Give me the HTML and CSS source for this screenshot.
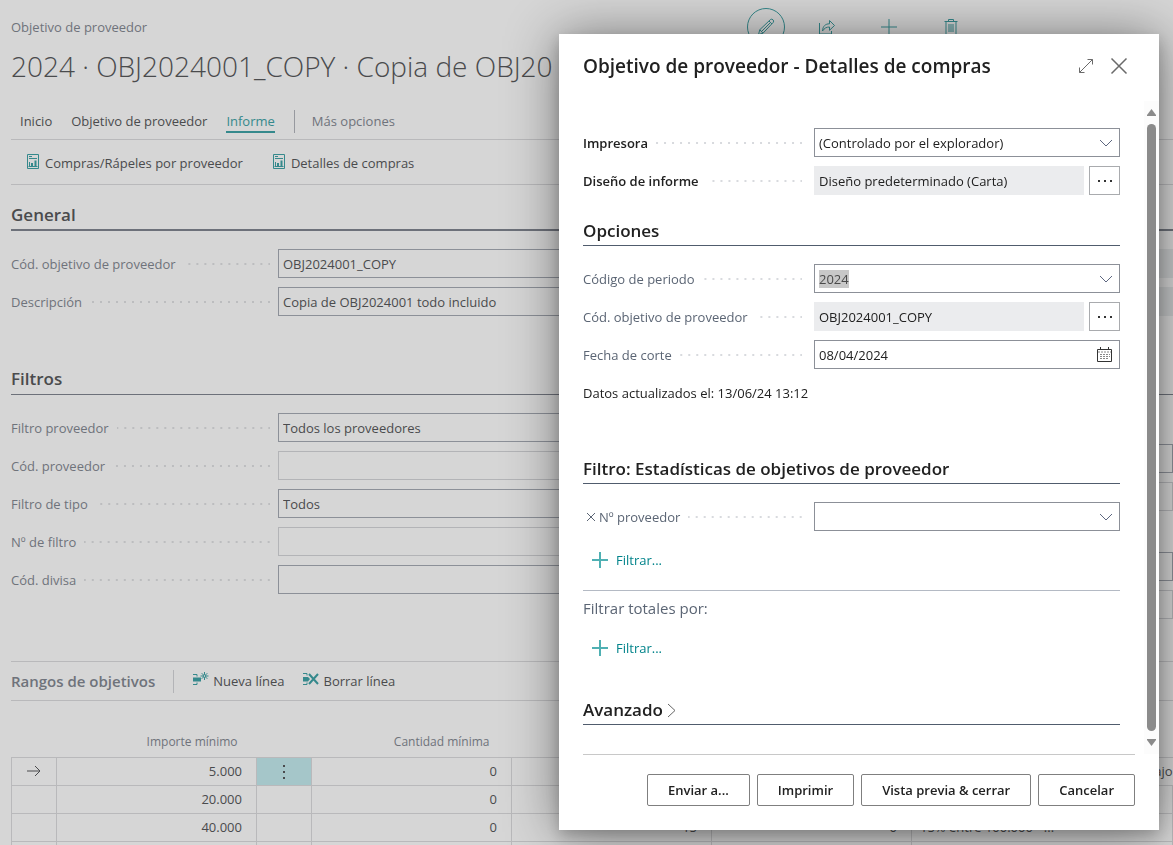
FILE: index.html
```html
<!DOCTYPE html>
<html lang="es">
<head>
<meta charset="utf-8">
<title>Objetivo de proveedor</title>
<link rel="stylesheet" href="styles.css">
</head>
<body>
<main class="page">
  <div class="topbar">
    <span class="caption">Objetivo de proveedor</span>
    <div class="tools">
      <button class="tool tool-round" aria-label="Editar"><svg width="20" height="20" viewBox="0 0 20 20"><path d="M2.500 17.500l1.300-4.800L14.500 2.500q1.300-.9 2.500.3t.3 2.500L7 16.200zM3.800 12.700L7 16.200M13 4l3 3M5.500 14.500L15 5"/></svg></button>
      <button class="tool" aria-label="Compartir"><svg width="18" height="18" viewBox="0 0 18 18"><path d="M1.500 5v11h12v-3M4.500 13c.3-5 3-7.200 7-7.200V2.500L16.500 7.500l-5 4.800V9C8.500 9 6.500 10 4.500 13z"/></svg></button>
      <button class="tool" aria-label="Nuevo"><svg width="18" height="18" viewBox="0 0 18 18"><path d="M9 1v16M1 9h16"/></svg></button>
      <button class="tool" aria-label="Eliminar"><svg width="18" height="18" viewBox="0 0 18 18"><path d="M2.500 3.500h13M6.500 3.500v-2h5v2M4 3.500v13h10v-13M7 6v8M9 6v8M11 6v8"/></svg></button>
    </div>
  </div>
  <h1 class="title">2024 · OBJ2024001_COPY · Copia de OBJ20</h1>
  <nav class="tabs">
    <a class="tab" href="#">Inicio</a>
    <a class="tab" href="#">Objetivo de proveedor</a>
    <a class="tab tab-active" href="#">Informe</a>
    <a class="tab tab-more" href="#">Más opciones</a>
  </nav>
  <div class="actions">
    <button class="action"><svg width="12" height="15" viewBox="0 0 12 15"><path d="M.5.5h11v14H.5zM2 2.500h3M2 4.500h8M2.500 8v4.500M1.500 12.500h9"/><path d="M4 9h2v3H4zM7.500 6.500h2V12h-2z" class="solid"/></svg>Compras/Rápeles por proveedor</button>
    <button class="action"><svg width="12" height="15" viewBox="0 0 12 15"><path d="M.5.5h11v14H.5zM2 2.500h3M2 4.500h8M2.500 8v4.500M1.500 12.500h9"/><path d="M4 9h2v3H4zM7.500 6.500h2V12h-2z" class="solid"/></svg>Detalles de compras</button>
  </div>

  <section>
    <h2 class="heading heading-strong">General</h2>
    <div class="columns columns-general">
      <div class="fields">
        <div class="field"><label for="g1">Cód. objetivo de proveedor</label><i class="dots"></i><input class="box" id="g1" value="OBJ2024001_COPY"></div>
        <div class="field"><label for="g2">Descripción</label><i class="dots"></i><input class="box" id="g2" value="Copia de OBJ2024001 todo incluido"></div>
      </div>
      <div class="fields">
        <input class="box box-read" readonly aria-label="Periodo">
        <input class="box box-read" readonly aria-label="Estado">
      </div>
    </div>
  </section>

  <section>
    <h2 class="heading">Filtros</h2>
    <div class="columns columns-filters">
      <div class="fields">
        <div class="field"><label for="f1">Filtro proveedor</label><i class="dots"></i><select class="box" id="f1"><option>Todos los proveedores</option></select></div>
        <div class="field"><label for="f2">Cód. proveedor</label><i class="dots"></i><input class="box box-off" id="f2"></div>
        <div class="field"><label for="f3">Filtro de tipo</label><i class="dots"></i><select class="box" id="f3"><option>Todos</option></select></div>
        <div class="field"><label for="f4">Nº de filtro</label><i class="dots"></i><input class="box box-off" id="f4"></div>
        <div class="field"><label for="f5">Cód. divisa</label><i class="dots"></i><input class="box" id="f5"></div>
      </div>
      <div class="pairs">
        <div class="fields"><input class="box" aria-label="Filtro 1"><input class="box box-off" aria-label="Código 1"></div>
        <div class="fields"><input class="box" aria-label="Filtro 2"><input class="box box-off" aria-label="Código 2"></div>
      </div>
    </div>
  </section>

  <section class="ranges">
    <div class="ranges-bar">
      <h2 class="ranges-title">Rangos de objetivos</h2>
      <button class="action action-line"><svg width="18" height="16" viewBox="0 0 18 16"><path d="M1 3.500h4v2M1 13.500h4v-2"/><path d="M1 6.500h8v4H1z" class="solid"/><path d="M12.500 1v8M8.500 5h8M9.700 2.200l5.600 5.600M15.300 2.200L9.700 7.800"/><circle cx="12.500" cy="5" r="1.300" class="hole"/></svg>Nueva línea</button>
      <button class="action action-line"><svg width="18" height="16" viewBox="0 0 18 16"><path d="M1 2.500h4v2M1 13.500h4v-2"/><path d="M1 6h5l2 2-2 2.500H1z" class="solid"/><path d="M7 3l9 10M16 3L7 13" class="bold"/></svg>Borrar línea</button>
    </div>
    <table class="grid">
      <colgroup><col class="c-mark"><col class="c-num"><col class="c-menu"><col class="c-num"><col class="c-num"><col class="c-num"><col></colgroup>
      <thead><tr><th></th><th>Importe mínimo</th><th></th><th>Cantidad mínima</th><th></th><th></th><th></th></tr></thead>
      <tbody>
        <tr><td class="mark"><svg width="16" height="12" viewBox="0 0 16 12"><path d="M1 6h13M9 1l5 5-5 5"/></svg></td><td>5.000</td><td class="menu"><button class="dots-v" aria-label="Más"><svg width="4" height="16" viewBox="0 0 4 16"><path d="M1 1h2v2H1zM1 7h2v2H1zM1 13h2v2H1z"/></svg></button></td><td>0</td><td></td><td></td><td class="end">Por debajo</td></tr>
        <tr><td></td><td>20.000</td><td></td><td>0</td><td></td><td></td><td></td></tr>
        <tr><td></td><td>40.000</td><td></td><td>0</td><td>15</td><td>0</td><td class="text">15% entre 100.000 - ...</td></tr>
        <tr><td></td><td></td><td></td><td></td><td></td><td></td><td></td></tr>
      </tbody>
    </table>
  </section>
</main>

<div class="overlay">
  <div class="dialog" role="dialog" aria-labelledby="dlg">
    <header class="dialog-head">
      <h2 class="dialog-title" id="dlg">Objetivo de proveedor - Detalles de compras</h2>
      <button class="icon-btn" aria-label="Expandir"><svg width="16" height="16" viewBox="0 0 16 16"><path d="M1.500 14.500l13-13M9.500 1.500h5v5M1.500 9.500v5h5"/></svg></button>
      <button class="icon-btn" aria-label="Cerrar"><svg class="close" width="18" height="18" viewBox="0 0 18 18"><path d="M1.500 1.500l15 15M16.500 1.500l-15 15"/></svg></button>
    </header>
    <div class="dialog-body">
      <div class="content">
        <div class="fields">
          <div class="field strong"><label for="d1">Impresora</label><i class="dots"></i><div class="control"><select class="box" id="d1"><option>(Controlado por el explorador)</option></select><svg class="chev" width="14" height="8" viewBox="0 0 14 8"><path d="M1 1l6 6 6-6"/></svg></div></div>
          <div class="field strong"><label for="d2">Diseño de informe</label><i class="dots"></i><div class="control"><input class="box box-read" id="d2" readonly value="Diseño predeterminado (Carta)"><button class="more" aria-label="Elegir diseño"><svg width="16" height="4" viewBox="0 0 16 4"><path d="M1 1h2v2H1zM7 1h2v2H7zM13 1h2v2h-2z"/></svg></button></div></div>
        </div>
        <h3 class="sub sub-options">Opciones</h3>
        <div class="fields">
          <div class="field"><label for="d3">Código de periodo</label><i class="dots"></i><div class="control"><input class="box" id="d3" value="2024"><svg class="chev" width="14" height="8" viewBox="0 0 14 8"><path d="M1 1l6 6 6-6"/></svg></div></div>
          <div class="field"><label for="d4">Cód. objetivo de proveedor</label><i class="dots"></i><div class="control"><input class="box box-read" id="d4" readonly value="OBJ2024001_COPY"><button class="more" aria-label="Elegir objetivo"><svg width="16" height="4" viewBox="0 0 16 4"><path d="M1 1h2v2H1zM7 1h2v2H7zM13 1h2v2h-2z"/></svg></button></div></div>
          <div class="field"><label for="d5">Fecha de corte</label><i class="dots"></i><div class="control"><input class="box" id="d5" value="08/04/2024"><svg class="cal" width="15" height="15" viewBox="0 0 15 15"><path d="M.5 2.500h14v12H.5zM3.500 0v3M11.500 0v3"/><path class="thin" d="M1 5h13M3 7.500h10M3 9.500h10M3 11.500h8"/></svg></div></div>
          <p class="note">Datos actualizados el: 13/06/24 13:12</p>
        </div>
        <h3 class="sub sub-filter">Filtro: Estadísticas de objetivos de proveedor</h3>
        <div class="field"><button class="remove" aria-label="Quitar filtro"><svg width="8" height="8" viewBox="0 0 8 8"><path d="M0 0l8 8M8 0L0 8"/></svg></button><label for="d6">Nº proveedor</label><i class="dots"></i><div class="control"><input class="box" id="d6"><svg class="chev" width="14" height="8" viewBox="0 0 14 8"><path d="M1 1l6 6 6-6"/></svg></div></div>
        <button class="add"><svg width="16" height="16" viewBox="0 0 16 16"><path d="M8 0v16M0 8h16"/></svg>Filtrar...</button>
        <p class="totals">Filtrar totales por:</p>
        <button class="add"><svg width="16" height="16" viewBox="0 0 16 16"><path d="M8 0v16M0 8h16"/></svg>Filtrar...</button>
        <h3 class="sub sub-advanced">Avanzado<svg width="9" height="15" viewBox="0 0 9 15"><path d="M1 1l7 6.500L1 14"/></svg></h3>
      </div>
      <div class="scroll">
        <svg width="9" height="7" viewBox="0 0 9 7"><path d="M4.500 0L9 6v1H0V6z"/></svg>
        <div class="thumb"></div>
        <svg width="9" height="7" viewBox="0 0 9 7"><path d="M4.500 7L9 1V0H0v1z"/></svg>
      </div>
    </div>
    <footer class="dialog-foot">
      <button class="btn">Enviar a...</button>
      <button class="btn">Imprimir</button>
      <button class="btn">Vista previa &amp; cerrar</button>
      <button class="btn">Cancelar</button>
    </footer>
  </div>
</div>
<script src="script.js"></script>
</body>
</html>
```
FILE: styles.css
```css
* { box-sizing: border-box; }
html, body { height: 100%; margin: 0; overflow: hidden; }
body { background: #d6d6d6; color: #4a4b4d; font: 13px/20px "Segoe UI", "Open Sans", "Noto Sans", sans-serif; }
button, input, select { font: inherit; color: inherit; }
button { background: none; border: 0; padding: 0; }
h1, h2, h3, p { margin: 0; font-weight: 400; }
a { color: inherit; text-decoration: none; }
svg { display: block; flex: none; fill: none; stroke: currentColor; }

.page { padding-left: 11px; }
.topbar { display: flex; align-items: center; justify-content: space-between; padding: 8px 208px 0 0; }
.caption { color: #6f737b; }
.tools { display: flex; align-items: center; gap: 33px; color: #35898c; }
.tool { display: flex; align-items: center; justify-content: center; width: 29px; }
.tool-round { width: 38px; height: 38px; border: 1px solid #35898c; border-radius: 50%; margin-right: -6px; }
.title { font-size: 28px; line-height: 40px; font-weight: 300; white-space: nowrap; padding-bottom: 2px; }

.tabs { display: flex; align-items: center; gap: 19px; height: 52px; padding: 16px 0 0 9px; border-bottom: 1px solid #b9b9bb; }
.tab { border-bottom: 2px solid transparent; line-height: 20px; }
.tab-active { color: #35898c; border-color: #35898c; }
.tab-more { color: #6f737b; border-bottom: 0; border-left: 1px solid #97999f; padding-left: 17px; line-height: 23px; }
.actions { display: flex; align-items: center; gap: 30px; height: 45px; padding: 2px 0 0 16px; border-bottom: 1px solid #b9b9bb; }
.action { display: flex; align-items: center; gap: 6px; }
.action svg { color: #35898c; margin-bottom: 4px; }
.solid { fill: currentColor; stroke: none; }
.bold { stroke-width: 2; }
.hole { fill: #d6d6d6; }

.heading { font-size: 17px; line-height: 24px; font-weight: 600; border-bottom: 1px solid #6d717a; padding: 18px 0 3px; }
.heading-strong { border-bottom-width: 2px; padding-bottom: 2px; }
.columns { display: grid; grid-template-columns: 1fr 1fr; column-gap: 30px; padding-top: 18px; }
.columns-general { padding-bottom: 33px; }
.columns-filters { padding-bottom: 42px; }
.fields { display: grid; gap: 9px; align-content: start; }
.pairs { display: grid; gap: 41px; align-content: start; padding-top: 31px; }
.field { display: grid; grid-template-columns: auto 1fr minmax(0, 304px); align-items: center; color: #6f737b; }
.page .field { grid-template-columns: auto 1fr calc(100% - 267px); }
.dots { height: 2px; margin: 1px 8px 0; background: linear-gradient(to left, #bcbdbf 2px, transparent 2px) right / 8px 2px repeat-x; }
.box { width: 100%; height: 29px; margin: 0; padding: 0 4px; border: 1px solid #8c9098; border-radius: 0; background: transparent; color: #4a4b4d; appearance: none; outline: 0; }
.box-off { border-color: #b3b4b7; }
.box-read { background: #c6c8c9; border-color: transparent; background-clip: border-box; }

.ranges-bar { display: flex; align-items: center; gap: 18px; height: 40px; border: 1px solid #b9b9bb; border-width: 1px 0; }
.ranges-title { font-size: 15px; line-height: 23px; font-weight: 600; color: #6f737b; padding-right: 18px; border-right: 1px solid #b3b4b7; }
.action-line { gap: 3px; }
.action-line svg { margin-bottom: 5px; }
.grid { width: 100%; table-layout: fixed; border-collapse: collapse; margin-top: 26px; }
.c-mark { width: 45px; }
.c-num { width: 200px; }
.c-menu { width: 55px; }
.grid th { height: 30px; padding: 0 19px 0 0; font-size: 12px; font-weight: 400; color: #6f737b; text-align: right; }
.grid th:nth-child(4) { padding-right: 22px; }
.grid td { height: 28px; padding: 0 14px 0 0; text-align: right; border: 1px solid #b9b9bb; white-space: nowrap; }
.grid .mark, .grid .menu { padding: 0; }
.mark svg, .dots-v svg { margin: auto; }
.grid .menu { background: #a5c6c9; }
.dots-v { display: block; width: 100%; padding-top: 2px; }
.dots-v svg, .more svg, .scroll svg { fill: currentColor; stroke: none; }
.grid .end { padding: 0; border-right: 0; }
.grid .text { text-align: left; padding-left: 8px; }

.overlay { position: fixed; inset: 0; display: flex; justify-content: flex-end; padding: 34px 14px 15px; }
.dialog { display: flex; flex-direction: column; width: 600px; max-width: 100%; background: #fff; color: #212121; box-shadow: 0 6px 14px rgba(0, 0, 0, .2), 0 2px 50px rgba(0, 0, 0, .45); }
.dialog-head { display: flex; align-items: center; gap: 16px; height: 67px; padding: 0 31px 4px 24px; color: #6a6a6a; }
.dialog-title { flex: 1; font-size: 19px; line-height: 26px; font-weight: 600; color: #212121; white-space: nowrap; }
.close { stroke-width: 1.5; }
.dialog-body { flex: 1; min-height: 0; display: flex; }
.content { flex: 1; padding: 27px 24px 0; }
.content .field { grid-template-columns: auto 1fr 306px; color: #5b6574; }
.content .field:has(.remove) { grid-template-columns: auto auto 1fr 306px; }
.content .strong { color: #212121; font-weight: 600; }
.content .dots { margin-right: 12px; background-image: linear-gradient(to left, #d8dade 2px, transparent 2px); }
.control { position: relative; display: flex; gap: 5px; font-weight: 400; }
.content .box { color: #212121; }
.content .box-read { background: #ebecee; }
.box::selection { background: #c8c8c8; color: #4a4a4a; }
.chev { position: absolute; right: 7px; top: 11px; color: #5d6780; }
.cal { position: absolute; right: 8px; top: 7px; color: #333; }
.thin { stroke: #888; stroke-dasharray: 2 1; }
.more { display: flex; align-items: center; justify-content: center; flex: none; width: 31px; border: 1px solid #a9abae; color: #333; }
.sub { font-size: 17px; line-height: 24px; font-weight: 600; padding-bottom: 2px; border-bottom: 1px solid #505c6d; margin-bottom: 18px; }
.sub-options { margin-top: 24px; }
.sub-filter { margin-top: 48px; }
.sub-advanced { display: flex; align-items: center; gap: 4px; margin: 40px 0 0; }
.sub-advanced svg { color: #666; }
.note { line-height: 31px; }
.remove { padding: 0 4px; }
.add { display: flex; align-items: center; gap: 8px; height: 20px; margin: 19px 0 20px 9px; color: #00838a; }
.add svg { stroke: #4fb0b3; stroke-width: 2; }
.totals { border-top: 1px solid #b4bac4; padding-top: 7px; font-size: 15px; line-height: 21px; color: #5b6574; }
.scroll { display: flex; flex-direction: column; align-items: center; gap: 8px; width: 15px; padding: 8px 0; background: #fcfcfc; color: #8b8b8b; }
.thumb { flex: 1; width: 9px; border-radius: 5px; background: #8b8b8b; }
.dialog-foot { display: flex; justify-content: flex-end; gap: 7px; margin: 0 24px; padding: 19px 0 24px; border-top: 1px solid #c8c8c8; }
.btn { height: 32px; padding: 0 20px; border: 1px solid #7f7f7f; border-radius: 2px; font-weight: 600; white-space: nowrap; }
```
FILE: script.js
```js
document.getElementById("d3").select();
```
